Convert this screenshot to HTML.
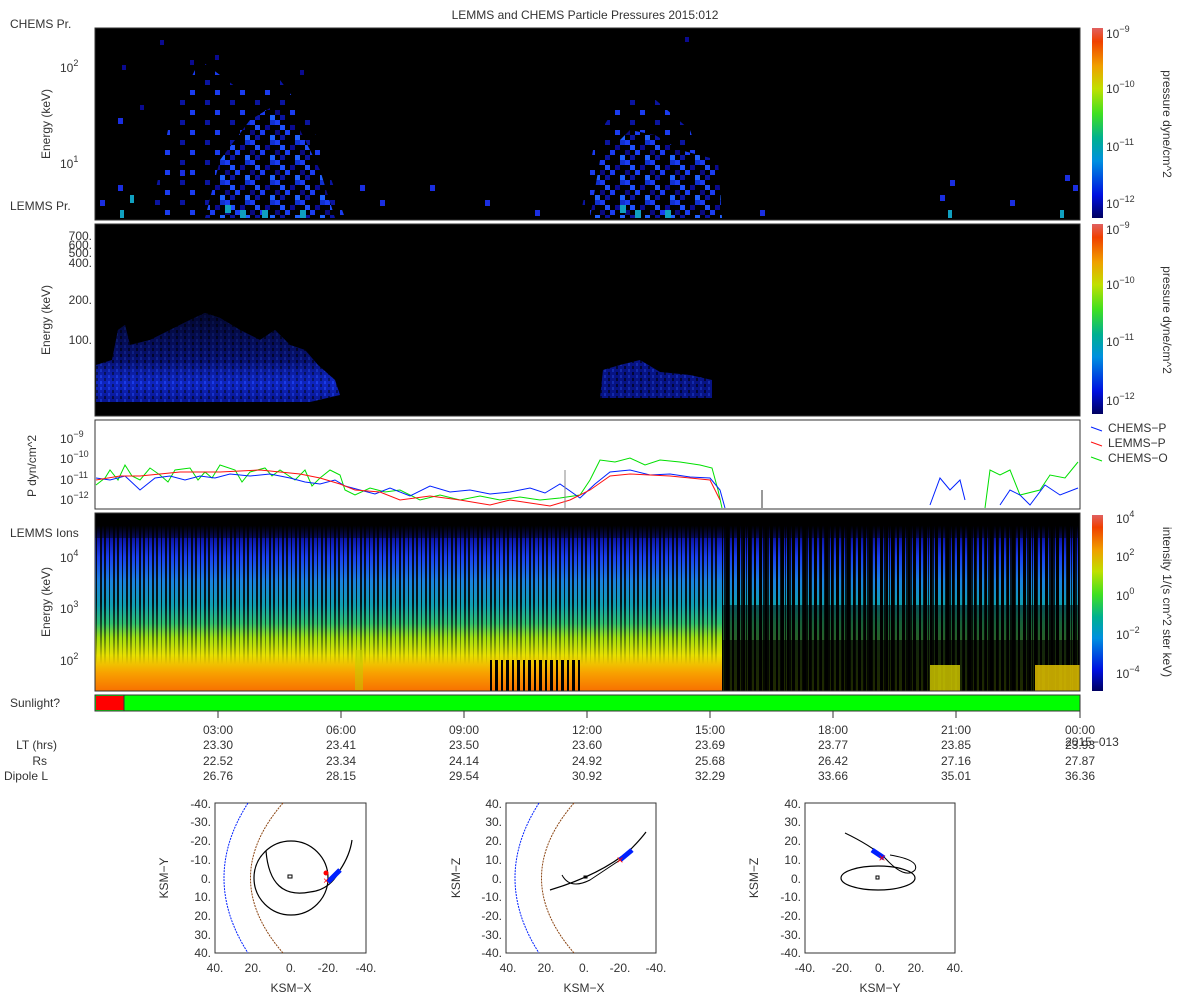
<!DOCTYPE html>
<html><head><meta charset="utf-8"><style>
html,body{margin:0;padding:0;background:#fff;width:1200px;height:1000px;overflow:hidden}
svg{display:block;font-family:"Liberation Sans","DejaVu Sans",sans-serif}
</style></head><body>
<svg width="1200" height="1000" viewBox="0 0 1200 1000" xmlns="http://www.w3.org/2000/svg">
<defs>
<linearGradient id="cb" x1="0" y1="1" x2="0" y2="0">
<stop offset="0" stop-color="#000060"/><stop offset="0.12" stop-color="#0010e0"/><stop offset="0.3" stop-color="#0090e0"/><stop offset="0.42" stop-color="#00b090"/><stop offset="0.55" stop-color="#40e020"/><stop offset="0.68" stop-color="#c0e000"/><stop offset="0.8" stop-color="#f0a000"/><stop offset="0.93" stop-color="#f04000"/><stop offset="1" stop-color="#e06060"/>
</linearGradient>
<linearGradient id="p4a" x1="0" y1="0" x2="0" y2="1">
<stop offset="0" stop-color="#000"/><stop offset="0.07" stop-color="#000"/><stop offset="0.13" stop-color="#0a10a0"/><stop offset="0.25" stop-color="#1a40f0"/><stop offset="0.38" stop-color="#1a80e0"/><stop offset="0.52" stop-color="#10a0b0"/><stop offset="0.62" stop-color="#30c070"/><stop offset="0.7" stop-color="#a0e010"/><stop offset="0.8" stop-color="#e8e000"/><stop offset="0.9" stop-color="#f8a000"/><stop offset="1" stop-color="#f87000"/>
</linearGradient>
<linearGradient id="p4b" x1="0" y1="0" x2="0" y2="1">
<stop offset="0" stop-color="#000"/><stop offset="0.07" stop-color="#000"/><stop offset="0.13" stop-color="#0a10a0"/><stop offset="0.25" stop-color="#1a40f0"/><stop offset="0.38" stop-color="#1a80e0"/><stop offset="0.52" stop-color="#10a0b0"/><stop offset="0.62" stop-color="#30c070"/><stop offset="0.75" stop-color="#60c040"/><stop offset="1" stop-color="#a0d000"/>
</linearGradient>
<pattern id="st1" width="13" height="200" patternUnits="userSpaceOnUse">
<rect x="0" y="0" width="2" height="200" fill="#000"/><rect x="5" y="0" width="1" height="200" fill="#000"/><rect x="9" y="0" width="2" height="200" fill="#000"/>
</pattern>
<pattern id="st2" width="11" height="200" patternUnits="userSpaceOnUse">
<rect x="0" y="0" width="3" height="200" fill="#000"/><rect x="6" y="0" width="2" height="200" fill="#000"/>
</pattern>
<linearGradient id="mg1" x1="0" y1="0" x2="0" y2="1"><stop offset="0" stop-color="#fff"/><stop offset="0.5" stop-color="#fff"/><stop offset="0.7" stop-color="#888"/><stop offset="0.85" stop-color="#000"/></linearGradient>
<mask id="m1" maskUnits="userSpaceOnUse" x="95" y="513" width="625" height="178"><rect x="95" y="513" width="625" height="178" fill="url(#mg1)"/></mask>
<pattern id="pix" width="25" height="20" patternUnits="userSpaceOnUse">
<rect width="25" height="20" fill="#000"/>
<rect x="0" y="0" width="5" height="5" fill="#1a3cf0"/><rect x="5" y="5" width="5" height="5" fill="#2050ff"/><rect x="15" y="5" width="5" height="5" fill="#0a0a90"/><rect x="10" y="10" width="5" height="5" fill="#1a3cf0"/><rect x="20" y="15" width="5" height="5" fill="#2060ff"/><rect x="5" y="15" width="5" height="5" fill="#0a14a0"/><rect x="20" y="0" width="5" height="5" fill="#1030d0"/><rect x="0" y="10" width="5" height="5" fill="#0a0a80"/>
</pattern>
<pattern id="pixs" width="25" height="20" patternUnits="userSpaceOnUse">
<rect width="25" height="20" fill="#000"/>
<rect x="5" y="0" width="5" height="5" fill="#0a14a0"/><rect x="15" y="10" width="5" height="5" fill="#1a3cf0"/>
</pattern>
<pattern id="pix2" width="8" height="6" patternUnits="userSpaceOnUse">
<rect width="8" height="6" fill="#0a1ab0"/><rect x="0" y="0" width="2" height="3" fill="#000" opacity="0.6"/><rect x="4" y="3" width="2" height="3" fill="#1838e8"/>
</pattern>
<linearGradient id="p2g" x1="0" y1="0" x2="0" y2="1"><stop offset="0" stop-color="#000" stop-opacity="0.75"/><stop offset="0.55" stop-color="#000" stop-opacity="0.35"/><stop offset="0.8" stop-color="#2050ff" stop-opacity="0.2"/><stop offset="1" stop-color="#000" stop-opacity="0.2"/></linearGradient>
</defs>

<text x="585" y="19" font-size="12" text-anchor="middle" fill="#333">LEMMS and CHEMS Particle Pressures  2015:012</text>

<text x="10" y="28" font-size="12" fill="#333">CHEMS Pr.</text>
<text x="10" y="210" font-size="12" fill="#333">LEMMS Pr.</text>
<rect x="95" y="28" width="985" height="192" fill="#000" stroke="#333"/>
<path d="M150,218 L170,120 L200,60 L240,90 L280,80 L310,120 L335,190 L345,218 Z" fill="url(#pixs)"/>
<path d="M205,218 L220,160 L250,120 L275,105 L300,130 L320,170 L335,218 Z" fill="url(#pix)"/>
<path d="M580,218 L595,140 L620,100 L650,95 L690,130 L720,218 Z" fill="url(#pixs)"/>
<path d="M590,218 L600,160 L630,130 L655,135 L680,150 L718,160 L722,218 Z" fill="url(#pix)"/>
<g fill="#1a2ee0">
<rect x="100" y="200" width="5" height="6"/><rect x="118" y="118" width="5" height="6"/><rect x="118" y="185" width="5" height="6"/><rect x="360" y="185" width="5" height="6"/><rect x="380" y="200" width="5" height="6"/><rect x="430" y="185" width="5" height="6"/><rect x="485" y="200" width="5" height="6"/><rect x="535" y="210" width="5" height="6"/><rect x="940" y="195" width="5" height="6"/><rect x="950" y="180" width="5" height="6"/><rect x="1065" y="175" width="5" height="6"/><rect x="1073" y="185" width="5" height="6"/><rect x="1010" y="200" width="5" height="6"/><rect x="760" y="210" width="5" height="6"/><rect x="180" y="170" width="5" height="6"/>
</g>
<g fill="#10a0c0">
<rect x="240" y="210" width="6" height="8"/><rect x="262" y="210" width="6" height="8"/><rect x="300" y="210" width="6" height="8"/><rect x="225" y="205" width="6" height="8"/><rect x="635" y="210" width="6" height="8"/><rect x="665" y="210" width="6" height="8"/><rect x="620" y="205" width="6" height="8"/><rect x="120" y="210" width="4" height="8"/><rect x="1060" y="210" width="4" height="8"/><rect x="948" y="210" width="4" height="8"/><rect x="130" y="195" width="4" height="8"/>
</g>
<g fill="#0a0a90"><rect x="160" y="40" width="4" height="5"/><rect x="190" y="60" width="4" height="5"/><rect x="215" y="55" width="4" height="5"/><rect x="300" y="70" width="4" height="5"/><rect x="685" y="37" width="4" height="5"/><rect x="140" y="105" width="4" height="5"/><rect x="122" y="65" width="4" height="5"/></g>
<g font-size="12" fill="#333"><text x="60" y="72">10<tspan dy="-6" font-size="9">2</tspan></text><text x="60" y="168">10<tspan dy="-6" font-size="9">1</tspan></text></g>
<text transform="translate(50,124) rotate(-90)" font-size="12" fill="#333" text-anchor="middle">Energy (keV)</text>
<rect x="1092" y="28" width="11" height="190" fill="url(#cb)"/>
<g font-size="12" fill="#333"><text x="1106" y="38">10<tspan dy="-6" font-size="9">−9</tspan></text><text x="1106" y="93">10<tspan dy="-6" font-size="9">−10</tspan></text><text x="1106" y="151">10<tspan dy="-6" font-size="9">−11</tspan></text><text x="1106" y="208">10<tspan dy="-6" font-size="9">−12</tspan></text></g>
<text transform="translate(1163,124) rotate(90)" font-size="12" fill="#333" text-anchor="middle">pressure dyne/cm^2</text>

<rect x="95" y="224" width="985" height="192" fill="#000" stroke="#333"/>
<path d="M96,402 L96,365 L112,360 L118,330 L125,325 L130,345 L150,340 L170,330 L190,320 L205,313 L220,318 L240,330 L260,340 L275,330 L290,345 L305,350 L318,365 L335,380 L340,395 L310,402 Z" fill="url(#pix2)"/>
<path d="M96,402 L96,365 L112,360 L118,330 L125,325 L130,345 L150,340 L170,330 L190,320 L205,313 L220,318 L240,330 L260,340 L275,330 L290,345 L305,350 L318,365 L335,380 L340,395 L310,402 Z" fill="url(#p2g)"/>
<path d="M600,398 L603,370 L620,365 L640,360 L660,372 L690,375 L712,380 L712,398 Z" fill="url(#pix2)"/>
<path d="M600,398 L603,370 L620,365 L640,360 L660,372 L690,375 L712,380 L712,398 Z" fill="#000" opacity="0.25"/>
<g font-size="12" fill="#333" text-anchor="end"><text x="92" y="240">700.</text><text x="92" y="249">600.</text><text x="92" y="257">500.</text><text x="92" y="267">400.</text><text x="92" y="304">200.</text><text x="92" y="344">100.</text></g>
<text transform="translate(50,320) rotate(-90)" font-size="12" fill="#333" text-anchor="middle">Energy (keV)</text>
<rect x="1092" y="224" width="11" height="190" fill="url(#cb)"/>
<g font-size="12" fill="#333"><text x="1106" y="234">10<tspan dy="-6" font-size="9">−9</tspan></text><text x="1106" y="289">10<tspan dy="-6" font-size="9">−10</tspan></text><text x="1106" y="346">10<tspan dy="-6" font-size="9">−11</tspan></text><text x="1106" y="405">10<tspan dy="-6" font-size="9">−12</tspan></text></g>
<text transform="translate(1163,320) rotate(90)" font-size="12" fill="#333" text-anchor="middle">pressure dyne/cm^2</text>

<rect x="95" y="420" width="985" height="89" fill="#fff" stroke="#333"/>
<g font-size="12" fill="#333"><text x="60" y="443">10<tspan dy="-6" font-size="9">−9</tspan></text><text x="60" y="463">10<tspan dy="-6" font-size="9">−10</tspan></text><text x="60" y="484">10<tspan dy="-6" font-size="9">−11</tspan></text><text x="60" y="504">10<tspan dy="-6" font-size="9">−12</tspan></text></g>
<text transform="translate(36,466) rotate(-90)" font-size="12" fill="#333" text-anchor="middle">P dyn/cm^2</text>
<polyline fill="none" stroke="#00e000" stroke-width="1" points="96,485 105,478 110,470 118,480 125,465 132,476 140,480 150,468 160,475 168,482 175,470 190,468 198,480 205,472 212,478 220,465 235,470 242,482 250,472 265,468 272,476 280,470 295,480 305,470 312,486 320,478 330,470 340,475 345,490 355,495 370,488 385,492 400,490 420,500 440,495 460,500 480,496 500,500 520,497 540,500 560,498 580,495 590,480 600,460 615,462 630,458 645,465 660,460 680,462 700,465 712,468 718,490 722,508"/>
<polyline fill="none" stroke="#0020ff" stroke-width="1" points="96,478 110,480 125,476 140,490 155,478 170,476 185,480 200,476 215,478 230,474 250,476 270,474 290,478 305,482 320,484 335,480 345,486 360,490 375,494 390,488 410,496 430,486 450,492 470,490 490,494 510,492 530,488 545,493 560,484 580,498 595,484 610,472 630,470 650,475 670,474 690,477 710,478 720,490 725,508"/>
<polyline fill="none" stroke="#ff1010" stroke-width="1" points="96,480 120,476 140,476 160,474 180,472 200,472 220,472 240,471 260,470 280,472 300,474 320,478 340,484 355,490 380,492 400,500 430,496 460,500 490,505 510,500 530,503 550,506 570,500 590,490 610,476 630,474 650,475 670,476 690,478 710,480 720,500 M1040,505 1060,500 1078,490"/>
<polyline fill="none" stroke="#0020ff" points="930,505 940,478 950,490 960,480 965,500"/>
<line x1="565" y1="470" x2="565" y2="508" stroke="#888"/>
<line x1="762" y1="490" x2="762" y2="508" stroke="#333"/>
<polyline fill="none" stroke="#00e000" points="985,508 990,470 1000,475 1010,470 1020,495 1040,490 1050,475 1065,478 1078,462"/>
<polyline fill="none" stroke="#0020ff" points="1000,505 1010,490 1020,495 1030,505 1045,485 1060,495 1078,488"/>
<g font-size="12" fill="#333"><line x1="1091" y1="427" x2="1102" y2="431" stroke="#0020ff"/><text x="1108" y="432">CHEMS−P</text><line x1="1091" y1="442" x2="1102" y2="446" stroke="#ff1010"/><text x="1108" y="447">LEMMS−P</text><line x1="1091" y1="457" x2="1102" y2="461" stroke="#00e000"/><text x="1108" y="462">CHEMS−O</text></g>

<text x="10" y="537" font-size="12" fill="#333">LEMMS Ions</text>
<rect x="95" y="513" width="627" height="178" fill="url(#p4a)"/>
<rect x="722" y="513" width="358" height="178" fill="url(#p4b)"/>
<rect x="95" y="513" width="627" height="178" fill="url(#st1)" opacity="0.85" mask="url(#m1)"/>
<rect x="95" y="513" width="985" height="25" fill="#000" opacity="0.5"/>
<rect x="722" y="513" width="358" height="178" fill="url(#st2)"/>
<rect x="722" y="513" width="358" height="178" fill="url(#st1)" opacity="0.8"/>
<rect x="722" y="605" width="358" height="86" fill="#000" opacity="0.5"/>
<rect x="722" y="640" width="358" height="51" fill="#000" opacity="0.6"/>
<rect x="930" y="665" width="30" height="26" fill="#d8d000" opacity="0.8"/>
<rect x="1035" y="665" width="45" height="26" fill="#e0c000" opacity="0.85"/>
<rect x="490" y="660" width="90" height="31" fill="url(#st2)"/>
<rect x="355" y="650" width="8" height="40" fill="#c0d000" opacity="0.5"/>
<rect x="95" y="513" width="985" height="178" fill="none" stroke="#333"/>
<g font-size="12" fill="#333"><text x="60" y="562">10<tspan dy="-6" font-size="9">4</tspan></text><text x="60" y="613">10<tspan dy="-6" font-size="9">3</tspan></text><text x="60" y="665">10<tspan dy="-6" font-size="9">2</tspan></text></g>
<text transform="translate(50,602) rotate(-90)" font-size="12" fill="#333" text-anchor="middle">Energy (keV)</text>
<rect x="1092" y="515" width="11" height="176" fill="url(#cb)"/>
<g font-size="12" fill="#333"><text x="1116" y="523">10<tspan dy="-6" font-size="9">4</tspan></text><text x="1116" y="561">10<tspan dy="-6" font-size="9">2</tspan></text><text x="1116" y="600">10<tspan dy="-6" font-size="9">0</tspan></text><text x="1116" y="639">10<tspan dy="-6" font-size="9">−2</tspan></text><text x="1116" y="678">10<tspan dy="-6" font-size="9">−4</tspan></text></g>
<text transform="translate(1163,602) rotate(90)" font-size="12" fill="#333" text-anchor="middle">intensity 1/(s cm^2 ster keV)</text>

<text x="10" y="707" font-size="12" fill="#333">Sunlight?</text>
<rect x="95" y="695" width="985" height="16" fill="#00ff00" stroke="#333"/>
<rect x="96" y="696" width="28" height="14" fill="#ff0000"/>
<line x1="124" y1="695" x2="124" y2="711" stroke="#333"/>

<g stroke="#333"><line x1="218" y1="711" x2="218" y2="718"/><line x1="341" y1="711" x2="341" y2="718"/><line x1="464" y1="711" x2="464" y2="718"/><line x1="587" y1="711" x2="587" y2="718"/><line x1="710" y1="711" x2="710" y2="718"/><line x1="833" y1="711" x2="833" y2="718"/><line x1="956" y1="711" x2="956" y2="718"/><line x1="1080" y1="711" x2="1080" y2="718"/></g>
<g font-size="12" fill="#333" text-anchor="middle">
<text x="218" y="734">03:00</text><text x="341" y="734">06:00</text><text x="464" y="734">09:00</text><text x="587" y="734">12:00</text><text x="710" y="734">15:00</text><text x="833" y="734">18:00</text><text x="956" y="734">21:00</text><text x="1080" y="734">00:00</text>
<text x="218" y="749">23.30</text><text x="341" y="749">23.41</text><text x="464" y="749">23.50</text><text x="587" y="749">23.60</text><text x="710" y="749">23.69</text><text x="833" y="749">23.77</text><text x="956" y="749">23.85</text><text x="1080" y="749">23.93</text>
<text x="218" y="765">22.52</text><text x="341" y="765">23.34</text><text x="464" y="765">24.14</text><text x="587" y="765">24.92</text><text x="710" y="765">25.68</text><text x="833" y="765">26.42</text><text x="956" y="765">27.16</text><text x="1080" y="765">27.87</text>
<text x="218" y="780">26.76</text><text x="341" y="780">28.15</text><text x="464" y="780">29.54</text><text x="587" y="780">30.92</text><text x="710" y="780">32.29</text><text x="833" y="780">33.66</text><text x="956" y="780">35.01</text><text x="1080" y="780">36.36</text>
<text x="1092" y="746">2015−013</text>
</g>
<g font-size="12" fill="#333" text-anchor="end"><text x="57" y="749">LT (hrs)</text><text x="47" y="765">Rs</text><text x="48" y="780">Dipole L</text></g>

<g font-size="12" fill="#333">
<rect x="215" y="803" width="151" height="150" fill="#fff" stroke="#333"/>
<path d="M248,803 Q200,878 248,953" fill="none" stroke="#0020ff" stroke-dasharray="2,1"/>
<path d="M283,803 Q218,878 283,953" fill="none" stroke="#8b4513" stroke-dasharray="2,1"/>
<circle cx="291" cy="878" r="37" fill="none" stroke="#000" stroke-width="1.2"/>
<path d="M266,851 Q270,900 310,892 Q330,890 340,870 Q350,855 352,840" fill="none" stroke="#000" stroke-width="1.2"/>
<path d="M288,875 l4,0 l0,3 l-4,0z" fill="none" stroke="#000"/>
<path d="M328,882 L340,870" stroke="#0020ff" stroke-width="5"/>
<circle cx="326" cy="873" r="2.5" fill="#f00"/>
<text x="326" y="884" fill="#f00" font-size="10" text-anchor="middle">×</text>
<g text-anchor="end"><text x="211" y="808">-40.</text><text x="211" y="826">-30.</text><text x="211" y="845">-20.</text><text x="211" y="864">-10.</text><text x="211" y="883">0.</text><text x="211" y="901">10.</text><text x="211" y="920">20.</text><text x="211" y="939">30.</text><text x="211" y="957">40.</text></g>
<g text-anchor="middle"><text x="215" y="972">40.</text><text x="253" y="972">20.</text><text x="291" y="972">0.</text><text x="328" y="972">-20.</text><text x="366" y="972">-40.</text><text x="291" y="992">KSM−X</text></g>
<text transform="translate(168,878) rotate(-90)" text-anchor="middle">KSM−Y</text>

<rect x="506" y="803" width="150" height="150" fill="#fff" stroke="#333"/>
<path d="M539,803 Q491,878 539,953" fill="none" stroke="#0020ff" stroke-dasharray="2,1"/>
<path d="M574,803 Q509,878 574,953" fill="none" stroke="#8b4513" stroke-dasharray="2,1"/>
<path d="M550,890 Q600,875 630,850 Q640,840 646,832" fill="none" stroke="#000" stroke-width="1.2"/>
<path d="M562,875 Q570,890 590,880 Q605,870 620,860" fill="none" stroke="#000"/>
<path d="M584,876 l3,0 l0,2 l-3,0z" fill="none" stroke="#000"/>
<path d="M620,860 L632,850" stroke="#0020ff" stroke-width="5"/>
<text x="620" y="864" fill="#f00" font-size="12" text-anchor="middle">×</text>
<g text-anchor="end"><text x="502" y="808">40.</text><text x="502" y="826">30.</text><text x="502" y="845">20.</text><text x="502" y="864">10.</text><text x="502" y="883">0.</text><text x="502" y="901">-10.</text><text x="502" y="920">-20.</text><text x="502" y="939">-30.</text><text x="502" y="957">-40.</text></g>
<g text-anchor="middle"><text x="508" y="972">40.</text><text x="546" y="972">20.</text><text x="584" y="972">0.</text><text x="620" y="972">-20.</text><text x="656" y="972">-40.</text><text x="584" y="992">KSM−X</text></g>
<text transform="translate(460,878) rotate(-90)" text-anchor="middle">KSM−Z</text>

<rect x="805" y="803" width="150" height="150" fill="#fff" stroke="#333"/>
<ellipse cx="878" cy="878" rx="37" ry="12" fill="none" stroke="#000" stroke-width="1.2"/>
<path d="M845,833 Q870,845 885,858 Q905,880 915,870 Q920,860 890,855" fill="none" stroke="#000"/>
<path d="M876,876 l3,0 l0,3 l-3,0z" fill="none" stroke="#000"/>
<path d="M872,850 L884,858" stroke="#0020ff" stroke-width="5"/>
<text x="882" y="862" fill="#f00" font-size="12" text-anchor="middle">×</text>
<g text-anchor="end"><text x="801" y="808">40.</text><text x="801" y="826">30.</text><text x="801" y="845">20.</text><text x="801" y="864">10.</text><text x="801" y="883">0.</text><text x="801" y="901">-10.</text><text x="801" y="920">-20.</text><text x="801" y="939">-30.</text><text x="801" y="957">-40.</text></g>
<g text-anchor="middle"><text x="805" y="972">-40.</text><text x="842" y="972">-20.</text><text x="880" y="972">0.</text><text x="916" y="972">20.</text><text x="955" y="972">40.</text><text x="880" y="992">KSM−Y</text></g>
<text transform="translate(758,878) rotate(-90)" text-anchor="middle">KSM−Z</text>
</g>
</svg>
</body></html>
